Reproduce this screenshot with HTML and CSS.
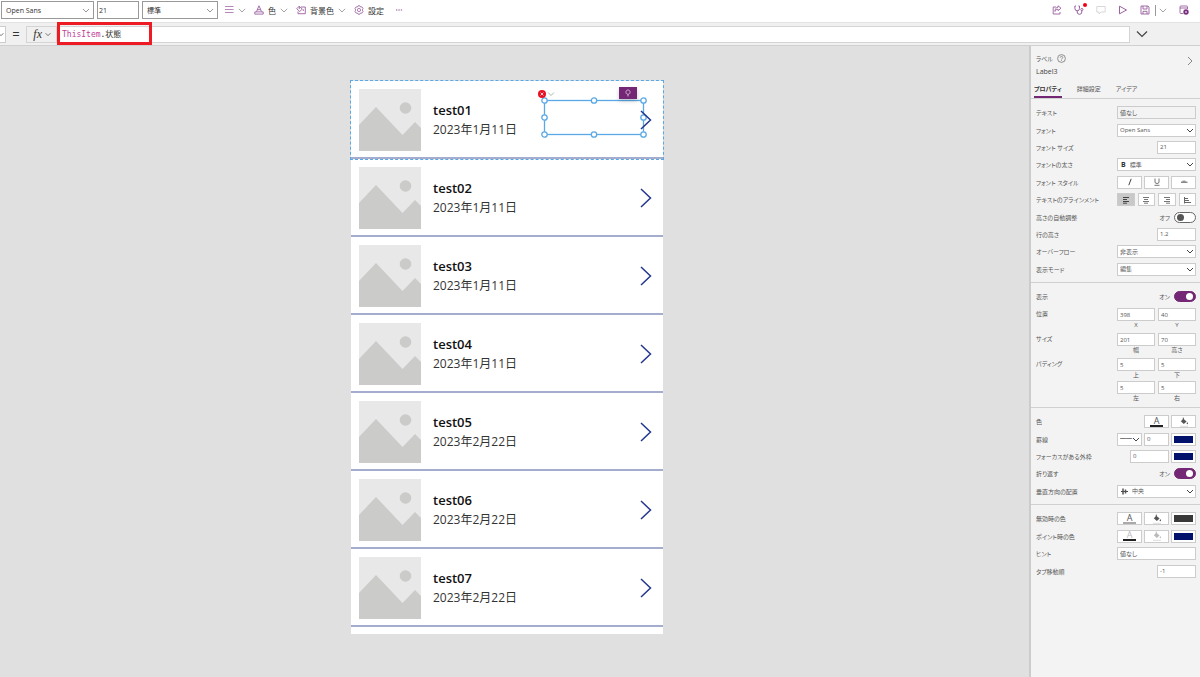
FILE: index.html
```
<!DOCTYPE html>
<html lang="ja">
<head>
  <meta charset="UTF-8">
  <title>Power Apps</title>
  <link rel="stylesheet" href="styles.css">
</head>
<body>
  <!-- Símbolos compartidos -->
  <svg class="simbolos" aria-hidden="true">
    <symbol id="foto" viewBox="0 0 62 62">
      <rect width="62" height="62" fill="#e8e8e8"/>
      <circle cx="46.500" cy="19" r="5.800" fill="#cbcbca"/>
      <path d="M0 36 17 18 43.500 46 56 33 62 39V62H0Z" fill="#cbcbca"/>
    </symbol>
    <symbol id="siguiente" viewBox="0 0 12 20">
      <path d="M1 1 10.500 10 1 19" fill="none" stroke="#24368c" stroke-width="1.500"/>
    </symbol>
    <symbol id="abajo" viewBox="0 0 8 5">
      <path d="M.8.8 4 4 7.200.8" fill="none" stroke="currentColor" stroke-width=".9"/>
    </symbol>
    <symbol id="cubo" viewBox="0 0 10 10">
      <path d="M4.300 1.800 7.600 4.600 4.800 7 1.800 4.300Z" fill="currentColor"/>
      <path d="M4.300.6V4" stroke="currentColor" stroke-width="1"/>
      <path d="M8.300 5c1 1.400.9 2.200 0 2.200s-.9-.8 0-2.200" fill="currentColor"/>
      <path d="M1 9.300H9" stroke="#ddd"/>
    </symbol>
  </svg>

  <header class="barra">
    <select class="campo fuente" aria-label="フォント"><option>Open Sans</option></select>
    <input class="campo tamano" type="text" value="21" aria-label="フォント サイズ">
    <select class="campo peso" aria-label="フォントの太さ"><option>標準</option></select>
    <button class="accion primera" aria-label="配置">
      <svg width="10" height="10" viewBox="0 0 10 10"><path d="M1 1.500H9.500M1 4.500H9.500M1 7.500H9.500" stroke="#b787bb" fill="none"/></svg>
      <svg class="flecha" width="8" height="5"><use href="#abajo"/></svg>
    </button>
    <button class="accion">
      <svg width="10" height="10" viewBox="0 0 10 10"><path d="M2.500 6.500 5 .8 7.500 6.500M3.300 4.700H6.700M.8 6.900H9.200V9.100H.8Z" stroke="#9a5f9f" stroke-width=".9" fill="none"/></svg>
      <span>色</span>
      <svg class="flecha" width="8" height="5"><use href="#abajo"/></svg>
    </button>
    <button class="accion">
      <svg width="10" height="10" viewBox="0 0 10 10"><path d="M5 2H9.300V8.700H2V6.500M.8 3.700 3.300 1.200 6.200 4.100 3.700 6.600ZM3.300 1.200V4M7.300 4.300V6" stroke="#9a5f9f" stroke-width=".9" fill="none"/></svg>
      <span>背景色</span>
      <svg class="flecha" width="8" height="5"><use href="#abajo"/></svg>
    </button>
    <button class="accion">
      <svg width="10" height="10" viewBox="0 0 10 10"><path d="M4 .8H6L6.500 2 8 1.900 9 3.600 8.300 5 9 6.400 8 8.100 6.500 8 6 9.200H4L3.500 8 2 8.100 1 6.400 1.700 5 1 3.600 2 1.900 3.500 2Z" stroke="#9a5f9f" stroke-width=".8" fill="none"/><circle cx="5" cy="5" r="1.600" stroke="#9a5f9f" stroke-width=".8" fill="none"/></svg>
      <span>設定</span>
    </button>
    <button class="accion puntos" aria-label="その他">
      <svg width="8" height="10" viewBox="0 0 8 10"><path d="M1 5H2.300M3.400 5H4.700M5.800 5H7.100" stroke="#8a4a90"/></svg>
    </button>

    <nav class="comandos">
      <button aria-label="共有"><svg width="10" height="10" viewBox="0 0 10 10"><path d="M4 2H1.200V9H8V7M6 .8 9 3.200 6 5.600V4.200C4.500 4.200 3.500 5 3 6.400 3 4 4 2.400 6 2.200Z" fill="none" stroke="#9a5f9f" stroke-width=".9"/></svg></button>
      <button class="revision" aria-label="アプリ チェック"><svg width="10" height="10" viewBox="0 0 10 10"><path d="M2 1H.9V3.500A2.300 2.300 0 0 0 5.500 3.500V1H4.400M3.200 5.800V7A2.300 2.300 0 0 0 7.800 7V5.500" fill="none" stroke="#9a5f9f"/><circle cx="7.900" cy="4.500" r="1.100" fill="none" stroke="#9a5f9f" stroke-width=".9"/></svg></button>
      <button aria-label="コメント"><svg width="10" height="10" viewBox="0 0 10 10"><path d="M.8 1.500H9.200V7H5L3 9V7H.8Z" fill="none" stroke="#d8d8d8"/></svg></button>
      <button aria-label="プレビュー"><svg width="10" height="10" viewBox="0 0 10 10"><path d="M1.500 1.200 8.500 5 1.500 8.800Z" fill="none" stroke="#9a5f9f"/></svg></button>
      <button aria-label="保存"><svg width="10" height="10" viewBox="0 0 10 10"><path d="M1 1H8L9 2V9H1ZM3 1V4H7V1M3 9V6.300H7V9" fill="none" stroke="#9a5f9f" stroke-width=".9"/></svg></button>
      <span class="separador"></span>
      <button class="opciones" aria-label="保存オプション"><svg class="flecha" width="8" height="5"><use href="#abajo"/></svg></button>
      <button aria-label="公開"><svg width="10" height="10" viewBox="0 0 10 10"><path d="M4 8.500H1.900Q1 8.500 1 7.600V1.900Q1 1 1.900 1H7.600Q8.500 1 8.500 1.900V4M1 3H8.500" fill="none" stroke="#9a5f9f" stroke-width=".9"/><circle cx="7" cy="7" r="2.700" fill="#7a2e7e"/><path d="M6 6 8 8M8 6 6 8" stroke="#fff" stroke-width=".5"/></svg></button>
    </nav>
  </header>

  <section class="formula">
    <button class="propiedad" aria-label="プロパティ"><svg width="6" height="5"><use href="#abajo"/></svg></button>
    <span class="igual">=</span>
    <button class="fx"><i>fx</i><svg width="6" height="5"><use href="#abajo"/></svg></button>
    <div class="texto-formula" role="textbox" contenteditable="true" aria-label="数式" spellcheck="false"><span class="objeto">ThisItem</span>.状態</div>
    <button class="expandir" aria-label="展開"><svg width="12" height="8" viewBox="0 0 12 8"><path d="M1 1.500 6 6.500 11 1.500" fill="none" stroke="#444" stroke-width="1.200"/></svg></button>
    <span class="resaltado"></span>
  </section>

  <div class="contenido">
    <main class="lienzo">
      <ul class="galeria">
        <li class="elemento activo">
          <svg class="foto"><use href="#foto"/></svg>
          <div class="datos"><h2>test01</h2><p>2023年1月11日</p></div>
          <svg class="siguiente"><use href="#siguiente"/></svg>
          <div class="seleccion">
            <svg class="error" width="18" height="8" viewBox="0 0 18 8"><circle cx="4" cy="4" r="4" fill="#e81123"/><path d="M2.600 2.600 5.400 5.400M5.400 2.600 2.600 5.400" stroke="#fff" stroke-width=".8"/><path d="M10 2.500 13 5.500 16 2.500" stroke="#aaa" stroke-width=".9" fill="none"/></svg>
            <span class="idea"><svg width="6" height="8" viewBox="0 0 6 8"><path d="M2 5.200C.2 3.800.8 1 3 1S5.800 3.800 4 5.200ZM2.200 6.800H3.800" fill="none" stroke="#e5cde6" stroke-width=".8"/></svg></span>
            <svg class="marco" width="106" height="41" viewBox="0 0 106 41">
              <g fill="none" stroke="#5aa9e6" stroke-width="1.300">
                <rect x="3.500" y="3.500" width="99" height="34"/>
                <g fill="#fff">
                  <circle cx="3.500" cy="3.500" r="2.700"/><circle cx="53" cy="3.500" r="2.700"/><circle cx="102.500" cy="3.500" r="2.700"/>
                  <circle cx="3.500" cy="20.500" r="2.700"/><circle cx="102.500" cy="20.500" r="2.700"/>
                  <circle cx="3.500" cy="37.500" r="2.700"/><circle cx="53" cy="37.500" r="2.700"/><circle cx="102.500" cy="37.500" r="2.700"/>
                </g>
              </g>
            </svg>
          </div>
        </li>
        <li class="elemento">
          <svg class="foto"><use href="#foto"/></svg>
          <div class="datos"><h2>test02</h2><p>2023年1月11日</p></div>
          <svg class="siguiente"><use href="#siguiente"/></svg>
        </li>
        <li class="elemento">
          <svg class="foto"><use href="#foto"/></svg>
          <div class="datos"><h2>test03</h2><p>2023年1月11日</p></div>
          <svg class="siguiente"><use href="#siguiente"/></svg>
        </li>
        <li class="elemento">
          <svg class="foto"><use href="#foto"/></svg>
          <div class="datos"><h2>test04</h2><p>2023年1月11日</p></div>
          <svg class="siguiente"><use href="#siguiente"/></svg>
        </li>
        <li class="elemento">
          <svg class="foto"><use href="#foto"/></svg>
          <div class="datos"><h2>test05</h2><p>2023年2月22日</p></div>
          <svg class="siguiente"><use href="#siguiente"/></svg>
        </li>
        <li class="elemento">
          <svg class="foto"><use href="#foto"/></svg>
          <div class="datos"><h2>test06</h2><p>2023年2月22日</p></div>
          <svg class="siguiente"><use href="#siguiente"/></svg>
        </li>
        <li class="elemento">
          <svg class="foto"><use href="#foto"/></svg>
          <div class="datos"><h2>test07</h2><p>2023年2月22日</p></div>
          <svg class="siguiente"><use href="#siguiente"/></svg>
        </li>
      </ul>
    </main>

    <aside class="panel">
      <div class="cabecera">
        <div>
          <p class="tipo">ラベル <svg width="9" height="9" viewBox="0 0 9 9"><circle cx="4.500" cy="4.500" r="3.900" fill="none" stroke="#777" stroke-width=".8"/><path d="M3.200 3.600C3.200 2 5.900 2 5.800 3.600 5.700 4.500 4.500 4.400 4.500 5.500M4.500 6.200V7" fill="none" stroke="#777" stroke-width=".8"/></svg></p>
          <p class="nombre">Label3</p>
        </div>
        <button class="cerrar" aria-label="閉じる"><svg width="6" height="10" viewBox="0 0 6 10"><path d="M1 1 5 5 1 9" fill="none" stroke="#888"/></svg></button>
      </div>
      <nav class="pestanas">
        <button class="actual">プロパティ</button>
        <button>詳細設定</button>
        <button>アイデア</button>
      </nav>

      <section class="grupo texto">
        <div class="fila"><label for="texto">テキスト</label><div class="control"><input id="texto" type="text" value="値なし" disabled></div></div>
        <div class="fila"><label for="fuente">フォント</label><div class="control"><select id="fuente"><option>Open Sans</option></select></div></div>
        <div class="fila"><label for="tamano">フォント サイズ</label><div class="control"><input id="tamano" class="medio" type="text" value="21"></div></div>
        <div class="fila"><label for="peso">フォントの太さ</label><div class="control caja"><b>B</b><select id="peso"><option>標準</option></select></div></div>
        <div class="fila"><span>フォント スタイル</span><div class="control">
          <button class="tercio" aria-label="斜体"><svg width="8" height="8" viewBox="0 0 8 8"><path d="M5.200.8 2.800 7.200" stroke="#444"/></svg></button>
          <button class="tercio" aria-label="下線"><svg width="8" height="8" viewBox="0 0 8 8"><path d="M2 .5V4Q2 5.500 4 5.500T6 4V.5M1.500 7.300H6.500" fill="none" stroke="#666" stroke-width=".9"/></svg></button>
          <button class="tercio" aria-label="取り消し線"><svg width="8" height="8" viewBox="0 0 8 8"><path d="M1 4.200H7.500" stroke="#555"/><path d="M2.500 3.200H5.500" stroke="#777"/></svg></button>
        </div></div>
        <div class="fila"><span>テキストのアラインメント</span><div class="control alinear">
          <button class="marcado" aria-label="左揃え"><svg width="8" height="8" viewBox="0 0 8 8"><path d="M1 1.500H7M1 3.500H5M1 5.500H7M1 7.200H5" stroke="#444"/></svg></button>
          <button aria-label="中央揃え"><svg width="8" height="8" viewBox="0 0 8 8"><path d="M1 1.500H7M2 3.500H6M1 5.500H7M2 7.200H6" stroke="#777"/></svg></button>
          <button aria-label="右揃え"><svg width="8" height="8" viewBox="0 0 8 8"><path d="M1 1.500H7M3 3.500H7M1 5.500H7M3 7.200H7" stroke="#777"/></svg></button>
          <button aria-label="両端揃え"><svg width="8" height="8" viewBox="0 0 8 8"><path d="M1.500 1V7.500M2 2.500H5M2 4.500H6M2 6.500H8" stroke="#666"/></svg></button>
        </div></div>
        <div class="fila"><label for="auto">高さの自動調整</label><div class="control"><span>オフ</span><input id="auto" type="checkbox"></div></div>
        <div class="fila"><label for="linea">行の高さ</label><div class="control"><input id="linea" class="medio" type="text" value="1.2"></div></div>
        <div class="fila"><label for="desborde">オーバーフロー</label><div class="control"><select id="desborde"><option>非表示</option></select></div></div>
        <div class="fila"><label for="modo">表示モード</label><div class="control"><select id="modo"><option>編集</option></select></div></div>
      </section>

      <section class="grupo posicion">
        <div class="fila"><label for="visible">表示</label><div class="control"><span>オン</span><input id="visible" type="checkbox" checked></div></div>
        <div class="fila doble"><span>位置</span><div class="pares">
          <div class="par"><input id="x" type="text" value="398"><label for="x">X</label></div>
          <div class="par"><input id="y" type="text" value="40"><label for="y">Y</label></div>
        </div></div>
        <div class="fila doble"><span>サイズ</span><div class="pares">
          <div class="par"><input id="ancho" type="text" value="201"><label for="ancho">幅</label></div>
          <div class="par"><input id="alto" type="text" value="70"><label for="alto">高さ</label></div>
        </div></div>
        <div class="fila doble"><span>パディング</span><div class="pares">
          <div class="par"><input id="arriba" type="text" value="5"><label for="arriba">上</label></div>
          <div class="par"><input id="debajo" type="text" value="5"><label for="debajo">下</label></div>
          <div class="par"><input id="izquierda" type="text" value="5"><label for="izquierda">左</label></div>
          <div class="par"><input id="derecha" type="text" value="5"><label for="derecha">右</label></div>
        </div></div>
      </section>

      <section class="grupo colores">
        <div class="fila"><span>色</span><div class="control">
          <button class="tercio letra" aria-label="文字色"><span>A</span></button>
          <button class="tercio" aria-label="塗りつぶし"><svg width="10" height="10"><use href="#cubo"/></svg></button>
        </div></div>
        <div class="fila"><label for="borde">罫線</label><div class="control">
          <select class="tercio trazo" aria-label="線の種類"><option>━━</option></select>
          <input id="borde" class="tercio" type="text" value="0">
          <button class="tercio muestra" aria-label="罫線の色"></button>
        </div></div>
        <div class="fila"><label for="foco">フォーカスがある外枠</label><div class="control">
          <input id="foco" class="medio" type="text" value="0">
          <button class="tercio muestra" aria-label="外枠の色"></button>
        </div></div>
        <div class="fila"><label for="ajuste">折り返す</label><div class="control"><span>オン</span><input id="ajuste" type="checkbox" checked></div></div>
        <div class="fila"><label for="vertical">垂直方向の配置</label><div class="control caja"><svg width="7" height="7" viewBox="0 0 7 7"><path d="M0 3.500H7" stroke="#444"/><path d="M2 .5V6.500M4.500 1.500V5.500" stroke="#555" stroke-width="1.500"/></svg><select id="vertical"><option>中央</option></select></div></div>
      </section>

      <section class="grupo estados">
        <div class="fila"><span>無効時の色</span><div class="control">
          <button class="tercio letra gris" aria-label="無効時の文字色"><span>A</span></button>
          <button class="tercio" aria-label="無効時の塗りつぶし"><svg width="10" height="10"><use href="#cubo"/></svg></button>
          <button class="tercio muestra oscura" aria-label="無効時の罫線"></button>
        </div></div>
        <div class="fila"><span>ポイント時の色</span><div class="control">
          <button class="tercio letra clara" aria-label="ポイント時の文字色"><span>A</span></button>
          <button class="tercio tenue" aria-label="ポイント時の塗りつぶし"><svg width="10" height="10"><use href="#cubo"/></svg></button>
          <button class="tercio muestra" aria-label="ポイント時の罫線"></button>
        </div></div>
        <div class="fila"><label for="pista">ヒント</label><div class="control"><input id="pista" type="text" value="値なし"></div></div>
        <div class="fila"><label for="orden">タブ移動順</label><div class="control"><input id="orden" class="medio" type="text" value="-1"></div></div>
      </section>
    </aside>
  </div>
</body>
</html>
```
FILE: styles.css
```
/* Estilos generales */
* {
  box-sizing: border-box;
}

body {
  display: flex;
  flex-direction: column;
  min-height: 100vh;
  margin: 0;
  font-family: 'Open Sans', 'Noto Sans CJK JP', sans-serif;
  font-size: 8px;
  color: #333;
  background-color: #e0e0e0;
}

button, input, select {
  margin: 0;
  padding: 0;
  border: none;
  border-radius: 0;
  font: inherit;
  color: inherit;
  background: none;
}

select {
  appearance: none;
}

h2, p, ul {
  margin: 0;
  padding: 0;
}

svg {
  flex: none;
}

.simbolos {
  position: absolute;
  width: 0;
  height: 0;
}

/* Barra superior */
.barra {
  display: flex;
  align-items: center;
  gap: 3px;
  height: 22px;
  padding: 0 11px 2px 1px;
  background-color: #fff;
}

.campo {
  height: 18px;
  border: 1px solid #999;
  padding: 0 4px;
  font-size: 7px;
  background-color: #fff;
}

select.campo {
  background-image: url("data:image/svg+xml,%3Csvg xmlns='http://www.w3.org/2000/svg' width='8' height='5'%3E%3Cpath d='M1 1 4 4 7 1' fill='none' stroke='%23999'/%3E%3C/svg%3E");
  background-repeat: no-repeat;
  background-position: right 3px center;
}

.fuente {
  width: 93px;
}

.tamano {
  width: 42px;
  padding: 0 1px;
}

.peso {
  width: 76px;
}

.accion {
  display: flex;
  align-items: center;
  gap: 4px;
  margin-right: 5px;
}

.primera {
  margin-left: 3px;
}

.puntos {
  margin-left: 3px;
}

.flecha {
  color: #999;
}

.comandos {
  display: flex;
  align-items: center;
  gap: 12px;
  margin-left: auto;
}

.comandos button {
  display: flex;
  align-items: center;
}

.comandos .opciones {
  margin-left: -9px;
}

.revision {
  position: relative;
}

.revision::after {
  content: '';
  position: absolute;
  top: -2px;
  right: -3px;
  width: 4px;
  height: 4px;
  border-radius: 50%;
  background-color: #f00018;
}

.separador {
  width: 1px;
  height: 11px;
  margin-left: -7px;
  background-color: #999;
}

/* Barra de fórmulas */
.formula {
  position: relative;
  display: flex;
  align-items: center;
  height: 24px;
  border-top: 1px solid #e2e2e2;
  border-bottom: 1px solid #d0d0d0;
  background-color: #f0f0f0;
}

.propiedad {
  width: 6px;
  height: 17px;
  border: 1px solid #ccc;
  border-left: none;
  background-color: #fff;
}

.propiedad svg {
  display: block;
  margin-left: -2px;
}

.igual {
  width: 20px;
  font-size: 13px;
  text-align: center;
}

.fx {
  display: flex;
  align-items: center;
  justify-content: flex-end;
  gap: 3px;
  width: 31px;
  height: 17px;
  padding-right: 5px;
  border: 1px solid #d4d4d4;
  font-family: 'Liberation Serif', serif;
  font-size: 12px;
}

.texto-formula {
  flex: 1;
  height: 17px;
  border: 1px solid #d4d4d4;
  padding-left: 4px;
  font-family: 'DejaVu Sans Mono', 'Noto Sans CJK JP', monospace;
  font-size: 8px;
  line-height: 15px;
  background-color: #fff;
}

.objeto {
  color: #c0409a;
}

.expandir {
  width: 70px;
  padding-left: 6px;
  text-align: left;
}

.resaltado {
  position: absolute;
  top: -1px;
  left: 57px;
  width: 95px;
  height: 23px;
  border: 3px solid #ed1c24;
  pointer-events: none;
}

/* Lienzo y galería */
.contenido {
  display: flex;
  flex: 1;
}

.lienzo {
  flex: 1;
  padding: 35px 15px 0 0;
}

.galeria {
  width: 312px;
  margin: 0 auto;
  padding-bottom: 7px;
  list-style-type: none;
  background-color: #fff;
}

.elemento {
  position: relative;
  display: flex;
  align-items: center;
  gap: 12px;
  height: 78px;
  padding: 1px 11px 0 8px;
  border-bottom: 2px solid #a5adcf;
}

.activo {
  outline: 1px dashed #5aa9e6;
  outline-offset: 0;
}

.foto {
  width: 62px;
  height: 62px;
}

.datos {
  flex: 1;
}

.datos h2 {
  font-size: 13px;
  font-weight: 600;
  line-height: 19px;
  color: #111;
}

.datos p {
  font-size: 12px;
  line-height: 19px;
}

.siguiente {
  z-index: 1;
  width: 12px;
  height: 20px;
}

/* Control seleccionado */
.seleccion {
  position: absolute;
  top: 16px;
  left: 190px;
}

.marco {
  display: block;
}

.error {
  position: absolute;
  top: -7px;
  left: -3px;
}

.idea {
  position: absolute;
  top: -10px;
  right: 10px;
  display: flex;
  align-items: center;
  justify-content: center;
  width: 18px;
  height: 12px;
  background-color: #742774;
  box-shadow: 0 2px 4px rgba(0, 0, 0, 0.2);
}

/* Panel de propiedades */
.panel {
  width: 171px;
  border-left: 2px solid #ccc;
  font-size: 6px;
  font-feature-settings: 'palt';
  color: #555;
  background-color: #f3f3f3;
}

.cabecera {
  display: flex;
  justify-content: space-between;
  padding: 6px 7px 0 5px;
}

.tipo {
  display: flex;
  align-items: center;
  gap: 4px;
  height: 13px;
}

.nombre {
  font-size: 7px;
  line-height: 14px;
  color: #444;
}

.cerrar {
  align-self: flex-start;
  padding-top: 4px;
}

.pestanas {
  display: flex;
  gap: 15px;
  height: 19px;
  padding-left: 3px;
}

.pestanas .actual {
  border-bottom: 2px solid #742774;
  padding-top: 2px;
  font-weight: bold;
  color: #333;
}

.grupo {
  display: grid;
  grid-auto-rows: 1fr;
  padding: 5px 4px 4px 5px;
  border-top: 1px solid #d0d0d0;
}

.texto {
  min-height: 184px;
}

.posicion {
  grid-auto-rows: auto;
  row-gap: 3px;
}

.colores {
  min-height: 97px;
}

.estados {
  min-height: 80px;
}

.fila {
  display: flex;
  align-items: center;
  justify-content: space-between;
  min-height: 17px;
  white-space: nowrap;
}

.control {
  display: flex;
  align-items: center;
  justify-content: flex-end;
  gap: 2px;
  width: 79px;
}

.control button, .panel input[type="text"], .panel select {
  width: 100%;
  height: 13px;
  border: 1px solid #ccc;
  background-color: #fff;
}

.panel input[type="text"] {
  padding: 0 2px;
}

.panel input:disabled {
  background-color: #f3f3f3;
}

.panel select {
  padding: 0 2px;
  background-image: url("data:image/svg+xml,%3Csvg xmlns='http://www.w3.org/2000/svg' width='8' height='5'%3E%3Cpath d='M1 1 4 4 7 1' fill='none' stroke='%23444'/%3E%3C/svg%3E");
  background-repeat: no-repeat;
  background-position: right 1px center;
}

.panel input.medio {
  width: 39px;
}

.control .tercio, .panel input.tercio {
  width: 25px;
}

.control button {
  display: flex;
  align-items: center;
  justify-content: center;
  font-size: 9px;
}

.panel .caja {
  height: 13px;
  border: 1px solid #ccc;
  padding-left: 3px;
  background-color: #fff;
}

.caja b {
  font-size: 7px;
  color: #333;
}

.panel .caja select {
  height: 11px;
  border: none;
}

.control.alinear {
  gap: 3px;
}

.control .marcado {
  background-color: #c8c8c8;
}

/* Interruptores */
.panel input[type="checkbox"] {
  appearance: none;
  display: flex;
  align-items: center;
  width: 22px;
  height: 11px;
  margin-left: 2px;
  padding: 0 2px;
  border: 1px solid #666;
  border-radius: 6px;
  background-color: #fff;
}

.panel input[type="checkbox"]::before {
  content: '';
  width: 7px;
  height: 7px;
  border-radius: 50%;
  background-color: #555;
}

.panel input[type="checkbox"]:checked {
  justify-content: flex-end;
  border-color: #742774;
  background-color: #742774;
}

.panel input[type="checkbox"]:checked::before {
  background-color: #fff;
}

/* Pares de valores */
.doble {
  align-items: flex-start;
}

.doble > span {
  line-height: 13px;
}

.pares {
  display: grid;
  grid-template-columns: 1fr 1fr;
  gap: 1px 3px;
  width: 79px;
}

.par {
  text-align: center;
}

.par input {
  display: block;
}

.par label {
  display: block;
  line-height: 9px;
}

/* Botones de color */
.letra span {
  width: 13px;
  border-bottom: 2px solid #222;
  line-height: 8px;
}

.gris span {
  border-color: #aaa;
}

.clara span {
  color: #bbb;
}

.tenue {
  color: #bbb;
}

.control .muestra {
  background-color: #00126b;
  box-shadow: inset 0 0 0 2px #fff;
}

.control .oscura {
  background-color: #383838;
}
```
